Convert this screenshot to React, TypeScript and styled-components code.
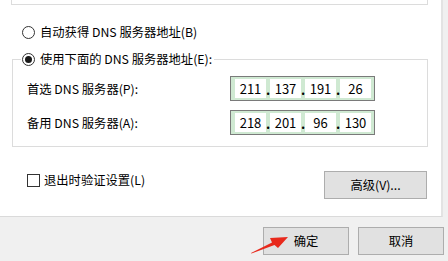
import React from "react";
import styled, { createGlobalStyle } from "styled-components";

const Global = createGlobalStyle`
  html, body { margin: 0; padding: 0; }
  body {
    width: 448px;
    height: 261px;
    overflow: hidden;
    background: #f0f0f0;
    font-family: "Microsoft YaHei", "Noto Sans CJK SC", sans-serif;
    font-size: 12.3px;
    color: #000;
  }
`;

const Window = styled.div`
  position: relative;
  width: 448px;
  height: 261px;
`;

const Panel = styled.div`
  width: 443px;
  height: 217px;
  box-sizing: border-box;
  background: #fff;
  border-right: 2px solid #e3e3e3;
  border-bottom: 1px solid #dadada;
  display: flex;
  flex-direction: column;
`;

const GroupTail = styled.div`
  margin-left: 11px;
  width: 417px;
  height: 5px;
  box-sizing: border-box;
  border: 1px solid #dcdcdc;
  border-top: none;
`;

const RadioRow = styled.label<{ $top?: number }>`
  display: flex;
  align-items: center;
  gap: 5px;
  height: 16px;
  line-height: 16px;
  margin-top: ${(p) => p.$top ?? 0}px;
  padding-left: 22px;
  white-space: nowrap;
`;

const RadioCircle = styled.span<{ $checked?: boolean }>`
  width: 13px;
  height: 13px;
  box-sizing: border-box;
  border-radius: 50%;
  border: 1px solid #333;
  background: #fff;
  display: flex;
  align-items: center;
  justify-content: center;
  flex: none;
  &::after {
    content: "";
    display: ${(p) => (p.$checked ? "block" : "none")};
    width: 7px;
    height: 7px;
    border-radius: 50%;
    background: #1a1a1a;
  }
`;

const GroupBox = styled.div`
  margin-top: 19px;
  margin-left: 12px;
  width: 416px;
  box-sizing: border-box;
  border: 1px solid #dcdcdc;
  padding-bottom: 11px;
`;

const Legend = styled.div`
  display: flex;
  align-items: center;
  gap: 5px;
  width: fit-content;
  height: 16px;
  line-height: 16px;
  margin-top: -9px;
  margin-left: 8px;
  padding: 0 2px 0 1px;
  background: #fff;
  white-space: nowrap;
`;

const Rows = styled.div`
  margin-top: 9px;
  display: flex;
  flex-direction: column;
  gap: 9px;
`;

const Row = styled.div`
  display: grid;
  grid-template-columns: 203px auto;
  align-items: center;
  padding-left: 14px;
`;

const Label = styled.span`
  white-space: nowrap;
`;

const IpBox = styled.div`
  display: flex;
  align-items: center;
  width: 145px;
  height: 25px;
  box-sizing: border-box;
  border: 1px solid #7a7a7a;
  background: #cfe9d2;
  padding: 0 3px 0 4px;
`;

const IpField = styled.span`
  width: 31px;
  height: 19px;
  background: #fff;
  display: flex;
  align-items: center;
  justify-content: center;
  font-size: 13px;
  color: #000;
`;

const IpDot = styled.span`
  width: 4px;
  display: flex;
  justify-content: center;
  font-size: 13px;
  font-weight: bold;
  line-height: 19px;
  padding-top: 2px;
`;

const BottomRow = styled.div`
  margin-top: 24px;
  display: flex;
  justify-content: space-between;
  align-items: flex-start;
  padding-left: 27px;
  padding-right: 14px;
`;

const CheckLabel = styled.label`
  display: flex;
  align-items: center;
  gap: 4px;
  height: 16px;
  margin-top: 1px;
  white-space: nowrap;
`;

const CheckBox = styled.span`
  width: 13px;
  height: 13px;
  box-sizing: border-box;
  border: 1px solid #333;
  background: #fff;
  flex: none;
`;

const Button = styled.button<{ $w: number }>`
  width: ${(p) => p.$w}px;
  height: 28px;
  box-sizing: border-box;
  background: #e1e1e1;
  border: 1px solid #adadad;
  font-family: inherit;
  font-size: 12.3px;
  color: #000;
  padding: 0;
  display: flex;
  align-items: center;
  justify-content: center;
`;

const Footer = styled.div`
  display: flex;
  justify-content: flex-end;
  gap: 9px;
  padding-top: 10px;
  padding-right: 4px;
`;

const Arrow = styled.svg`
  position: absolute;
  left: 248px;
  top: 232px;
  width: 44px;
  height: 24px;
`;

const Ip = ({ parts }: { parts: string[] }) => (
  <IpBox>
    {parts.map((p, i) => (
      <React.Fragment key={i}>
        {i > 0 && <IpDot>.</IpDot>}
        <IpField>{p}</IpField>
      </React.Fragment>
    ))}
  </IpBox>
);

export default function App() {
  return (
    <Window>
      <Global />
      <Panel>
        <GroupTail />
        <RadioRow $top={19}>
          <RadioCircle />
          <span>自动获得 DNS 服务器地址(B)</span>
        </RadioRow>
        <GroupBox>
          <Legend>
            <RadioCircle $checked />
            <span>使用下面的 DNS 服务器地址(E):</span>
          </Legend>
          <Rows>
            <Row>
              <Label>首选 DNS 服务器(P):</Label>
              <Ip parts={["211", "137", "191", "26"]} />
            </Row>
            <Row>
              <Label>备用 DNS 服务器(A):</Label>
              <Ip parts={["218", "201", "96", "130"]} />
            </Row>
          </Rows>
        </GroupBox>
        <BottomRow>
          <CheckLabel>
            <CheckBox />
            <span>退出时验证设置(L)</span>
          </CheckLabel>
          <Button $w={103}>高级(V)...</Button>
        </BottomRow>
      </Panel>
      <Footer>
        <Button $w={86}>确定</Button>
        <Button $w={86}>取消</Button>
      </Footer>
      <Arrow viewBox="0 0 44 24">
        <polygon
          points="3,21 24,10.5 22,6 40,5 30,16 26.5,13 3.5,21.6"
          fill="#e8291c"
        />
      </Arrow>
    </Window>
  );
}
